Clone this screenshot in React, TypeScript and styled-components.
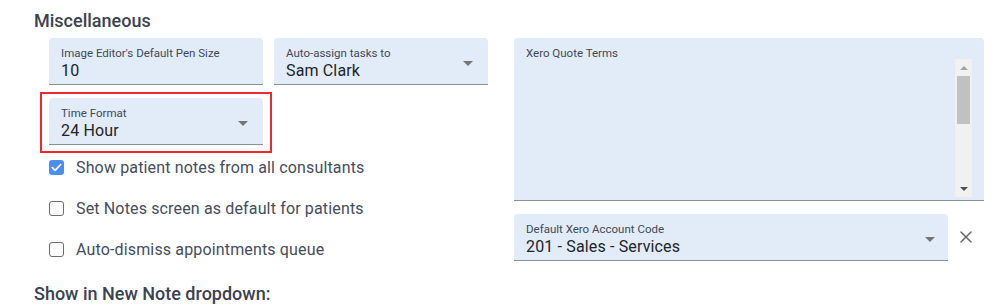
import React from "react";
import styled, { createGlobalStyle } from "styled-components";

const GlobalStyle = createGlobalStyle`
  html, body { margin: 0; padding: 0; background: #ffffff; }
  body { font-family: Roboto, "Liberation Sans", Arial, sans-serif; overflow: hidden; }
  * { box-sizing: border-box; }
`;

const Page = styled.div`
  width: 1004px;
  height: 308px;
  padding: 9px 0 0 34px;
  overflow: hidden;
`;

const SectionTitle = styled.h2<{ $gap?: number }>`
  margin: ${(p) => p.$gap ?? 0}px 0 0 0;
  font-size: 18px;
  line-height: 24px;
  font-weight: 500;
  color: #3b4252;
`;

const Body = styled.div`
  display: flex;
  gap: 26px;
  margin: 5px 0 0 15px;
`;

const LeftColumn = styled.div`
  width: 439px;
  display: flex;
  flex-direction: column;
`;

const FieldGrid = styled.div`
  display: grid;
  grid-template-columns: 214px 214px;
  column-gap: 11px;
  row-gap: 13px;
`;

const RightColumn = styled.div`
  width: 470px;
  display: flex;
  flex-direction: column;
  gap: 13px;
`;

const HighlightFrame = styled.div`
  margin: -6px -9px -8px -9px;
  padding: 4px 7px 6px 7px;
  border: 2px solid #ea2a2e;
`;

const FieldBox = styled.div<{ $height?: number }>`
  display: flex;
  align-items: flex-start;
  height: ${(p) => p.$height ?? 47}px;
  background: #e1ecf8;
  border-bottom: 1px solid #8a8f98;
  border-radius: 4px 4px 0 0;
  padding: 8px 12px 3px 12px;
`;

const FieldText = styled.div`
  flex: 1;
  display: flex;
  flex-direction: column;
  min-width: 0;
`;

const Label = styled.div`
  font-size: 11.5px;
  line-height: 15px;
  color: #414859;
  white-space: nowrap;
`;

const Value = styled.div`
  font-size: 16px;
  line-height: 20px;
  letter-spacing: 0.15px;
  color: #222329;
  white-space: nowrap;
`;

const Caret = styled.span<{ $right: number }>`
  align-self: center;
  margin-right: ${(p) => p.$right}px;
  margin-top: -1px;
  width: 0;
  height: 0;
  border-left: 5px solid transparent;
  border-right: 5px solid transparent;
  border-top: 5px solid #767676;
`;

const CheckList = styled.div`
  display: flex;
  flex-direction: column;
  margin-top: 2px;
`;

const CheckRow = styled.label`
  display: flex;
  align-items: center;
  height: 41px;
  gap: 12px;
  font-size: 16px;
  letter-spacing: 0.15px;
  color: #454c5d;
  cursor: pointer;
`;

const Box = styled.span<{ $checked: boolean }>`
  width: 15px;
  height: 15px;
  border-radius: 3px;
  display: flex;
  align-items: center;
  justify-content: center;
  background: ${(p) => (p.$checked ? "#4a8ff0" : "#ffffff")};
  border: ${(p) => (p.$checked ? "none" : "1.6px solid #6e6e6e")};
`;

const TextAreaBox = styled(FieldBox)`
  padding-right: 12px;
  padding-bottom: 3px;
`;

const Scrollbar = styled.div`
  width: 17px;
  align-self: stretch;
  margin-top: 13px;
  background: #f1f1f1;
  display: flex;
  flex-direction: column;
`;

const ScrollButton = styled.div<{ $up?: boolean; $dim?: boolean }>`
  height: 17px;
  display: flex;
  align-items: center;
  justify-content: center;
  &::before {
    content: "";
    width: 0;
    height: 0;
    border-left: 4px solid transparent;
    border-right: 4px solid transparent;
    ${(p) =>
      p.$up
        ? `border-bottom: 4px solid ${p.$dim ? "#a3a3a3" : "#505050"};`
        : `border-top: 4px solid ${p.$dim ? "#a3a3a3" : "#505050"};`}
  }
`;

const ScrollThumb = styled.div`
  height: 48px;
  margin: 0 2px;
  background: #c1c1c1;
`;

const ScrollSpace = styled.div`
  flex: 1;
`;

const SelectRow = styled.div`
  display: flex;
  align-items: center;
  gap: 12px;
`;

const SelectWrap = styled.div`
  width: 434px;
`;

const ClearButton = styled.button`
  border: none;
  background: transparent;
  padding: 0;
  margin-top: -2px;
  width: 12px;
  height: 12px;
  display: flex;
  align-items: center;
  justify-content: center;
  cursor: pointer;
`;

const Check = () => (
  <svg width="11" height="9" viewBox="0 0 11 9" fill="none">
    <path d="M1.3 4.6 L4.1 7.3 L9.7 1.5" stroke="#ffffff" strokeWidth="1.7" strokeLinecap="round" strokeLinejoin="round" />
  </svg>
);

type FieldProps = { label: string; value?: string; select?: boolean; caretRight?: number };

const Field = ({ label, value, select, caretRight = 3 }: FieldProps) => (
  <FieldBox>
    <FieldText>
      <Label>{label}</Label>
      <Value>{value}</Value>
    </FieldText>
    {select && <Caret $right={caretRight} />}
  </FieldBox>
);

const checks = [
  { label: "Show patient notes from all consultants", checked: true },
  { label: "Set Notes screen as default for patients", checked: false },
  { label: "Auto-dismiss appointments queue", checked: false },
];

export default function App() {
  return (
    <>
      <GlobalStyle />
      <Page>
        <SectionTitle>Miscellaneous</SectionTitle>
        <Body>
          <LeftColumn>
            <FieldGrid>
              <Field label="Image Editor's Default Pen Size" value="10" />
              <Field label="Auto-assign tasks to" value="Sam Clark" select />
              <HighlightFrame>
                <Field label="Time Format" value="24 Hour" select />
              </HighlightFrame>
            </FieldGrid>
            <CheckList>
              {checks.map((c) => (
                <CheckRow key={c.label}>
                  <Box $checked={c.checked}>{c.checked && <Check />}</Box>
                  {c.label}
                </CheckRow>
              ))}
            </CheckList>
          </LeftColumn>
          <RightColumn>
            <TextAreaBox $height={163}>
              <FieldText>
                <Label>Xero Quote Terms</Label>
              </FieldText>
              <Scrollbar>
                <ScrollButton $up $dim />
                <ScrollThumb />
                <ScrollSpace />
                <ScrollButton />
              </Scrollbar>
            </TextAreaBox>
            <SelectRow>
              <SelectWrap>
                <Field label="Default Xero Account Code" value="201 - Sales - Services" select caretRight={1} />
              </SelectWrap>
              <ClearButton aria-label="Clear">
                <svg width="12" height="12" viewBox="0 0 12 12">
                  <path d="M1 1 L11 11 M11 1 L1 11" stroke="#666666" strokeWidth="1.5" strokeLinecap="round" />
                </svg>
              </ClearButton>
            </SelectRow>
          </RightColumn>
        </Body>
        <SectionTitle $gap={12}>Show in New Note dropdown:</SectionTitle>
      </Page>
    </>
  );
}
